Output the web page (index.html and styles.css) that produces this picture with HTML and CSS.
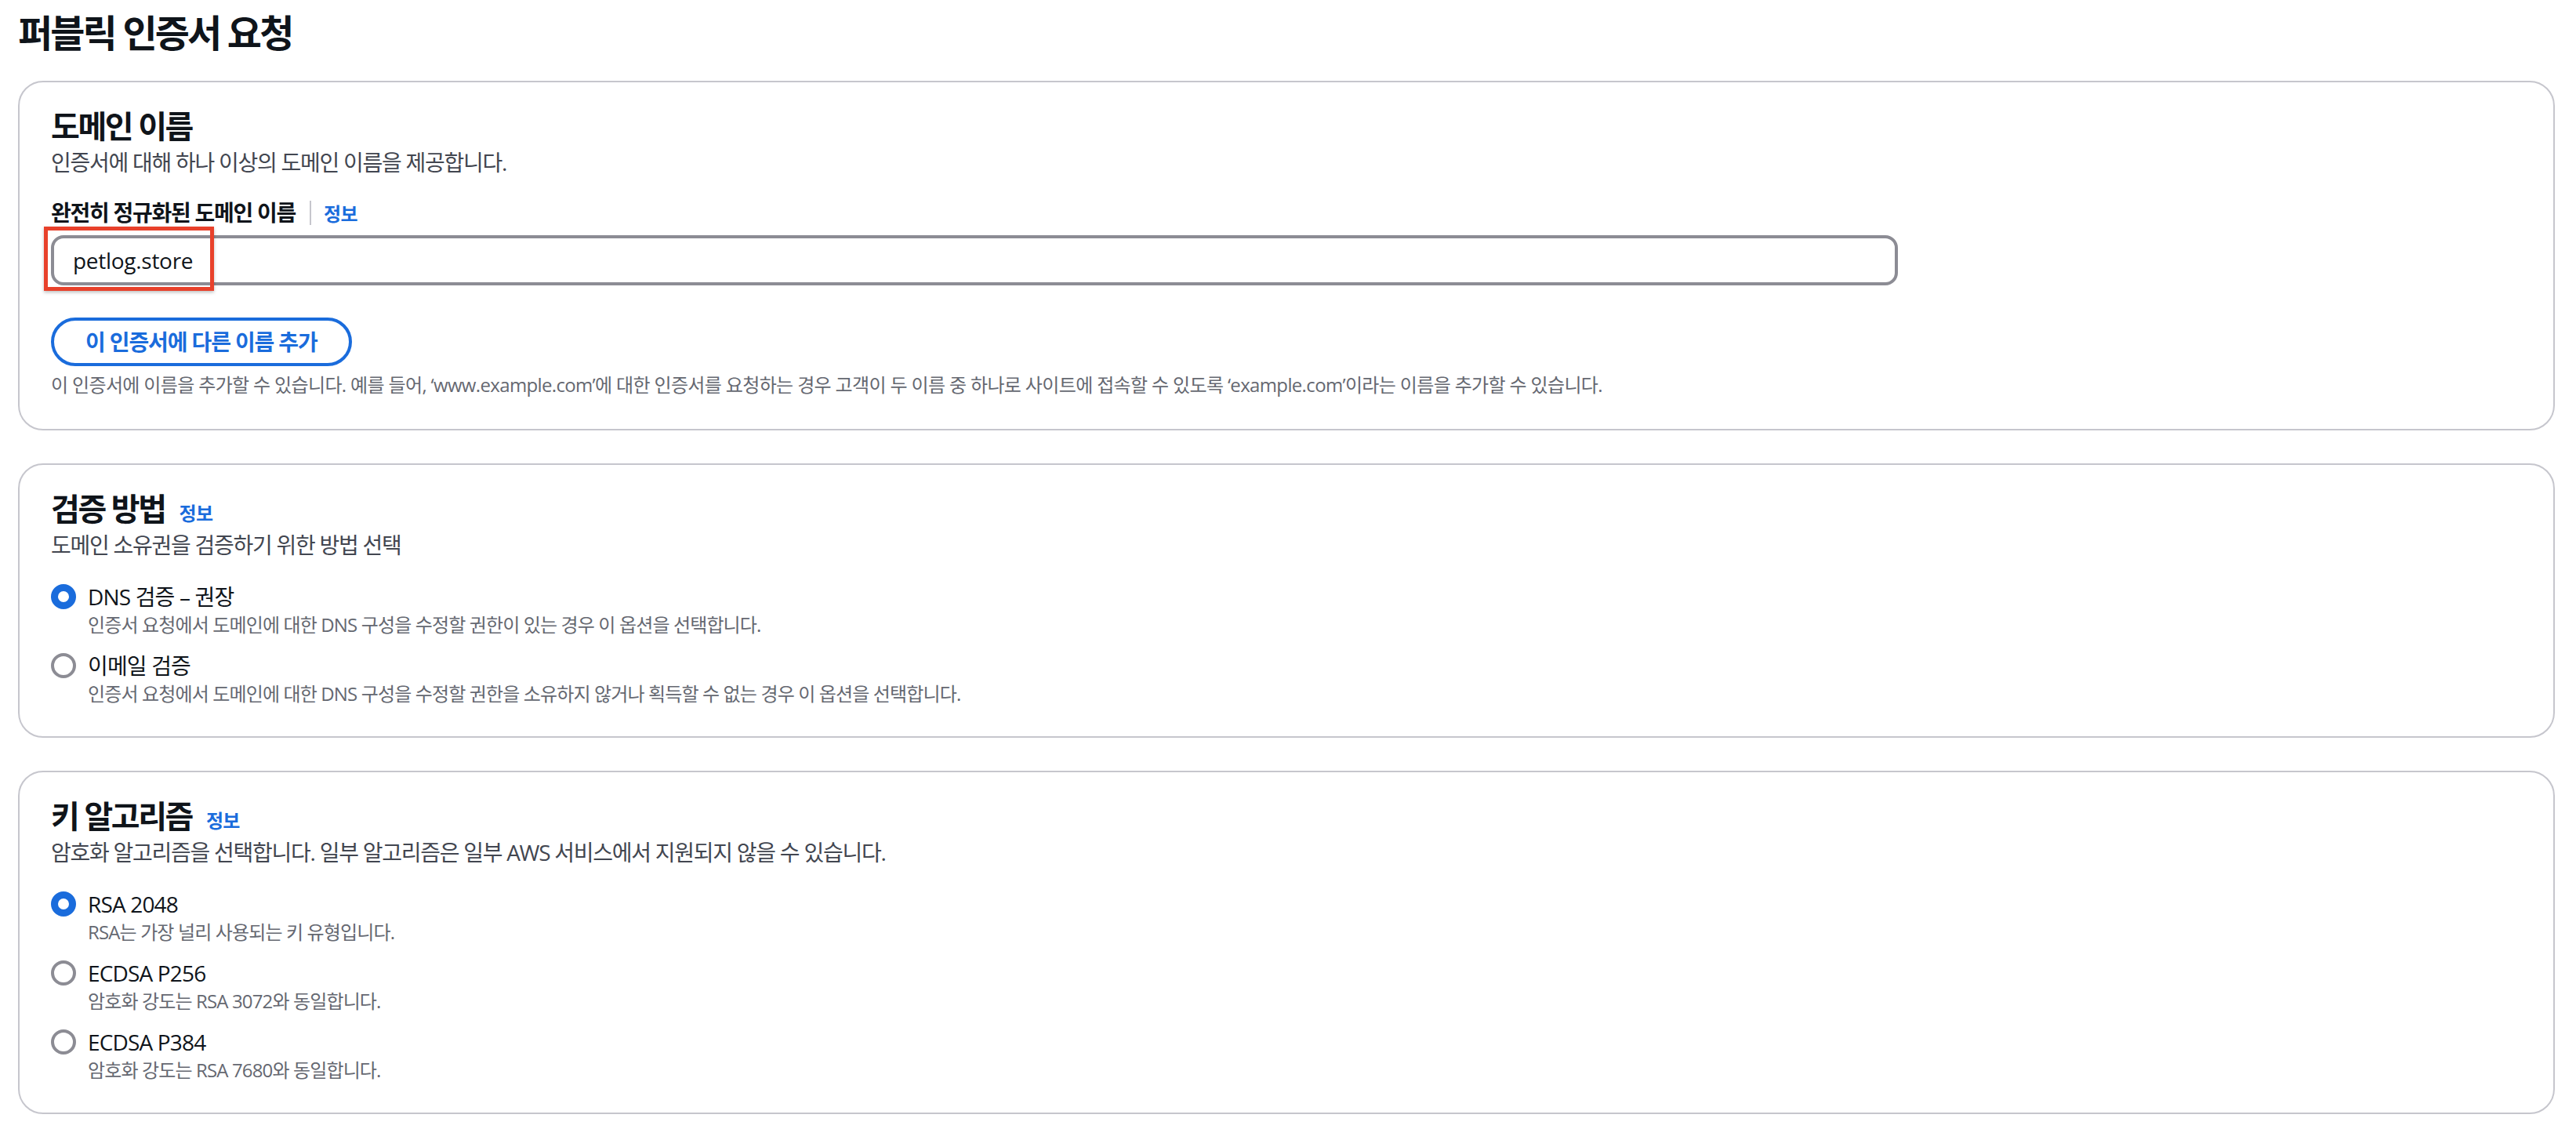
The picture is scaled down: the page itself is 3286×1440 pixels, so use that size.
FILE: index.html
```html
<!DOCTYPE html>
<html lang="ko">
<head>
<meta charset="utf-8">
<title>퍼블릭 인증서 요청</title>
<link rel="stylesheet" href="styles.css">
</head>
<body>
<main class="page">
  <h1 class="page-title">퍼블릭 인증서 요청</h1>

  <section class="card">
    <header class="card-header">
      <h2 class="card-title">도메인 이름</h2>
      <p class="card-desc">인증서에 대해 하나 이상의 도메인 이름을 제공합니다.</p>
    </header>
    <div class="card-body">
      <div class="field-label">
        <span class="label-text">완전히 정규화된 도메인 이름</span>
        <span class="label-divider"></span>
        <a class="info-link">정보</a>
      </div>
      <div class="input-wrap">
        <div class="text-input">petlog.store</div>
        <span class="annotation"></span>
      </div>
      <button class="btn-normal" type="button">이 인증서에 다른 이름 추가</button>
      <p class="constraint">이 인증서에 이름을 추가할 수 있습니다. 예를 들어, ‘www.example.com’에 대한 인증서를 요청하는 경우 고객이 두 이름 중 하나로 사이트에 접속할 수 있도록 ‘example.com’이라는 이름을 추가할 수 있습니다.</p>
    </div>
  </section>

  <section class="card">
    <header class="card-header">
      <h2 class="card-title">검증 방법<a class="info-link heading-info">정보</a></h2>
      <p class="card-desc">도메인 소유권을 검증하기 위한 방법 선택</p>
    </header>
    <div class="card-body radio-group">
      <div class="radio-item">
        <span class="radio checked"></span>
        <span class="radio-label">DNS 검증 – 권장</span>
        <span class="radio-desc">인증서 요청에서 도메인에 대한 DNS 구성을 수정할 권한이 있는 경우 이 옵션을 선택합니다.</span>
      </div>
      <div class="radio-item">
        <span class="radio"></span>
        <span class="radio-label">이메일 검증</span>
        <span class="radio-desc">인증서 요청에서 도메인에 대한 DNS 구성을 수정할 권한을 소유하지 않거나 획득할 수 없는 경우 이 옵션을 선택합니다.</span>
      </div>
    </div>
  </section>

  <section class="card">
    <header class="card-header">
      <h2 class="card-title">키 알고리즘<a class="info-link heading-info">정보</a></h2>
      <p class="card-desc">암호화 알고리즘을 선택합니다. 일부 알고리즘은 일부 AWS 서비스에서 지원되지 않을 수 있습니다.</p>
    </header>
    <div class="card-body radio-group">
      <div class="radio-item">
        <span class="radio checked"></span>
        <span class="radio-label">RSA 2048</span>
        <span class="radio-desc">RSA는 가장 널리 사용되는 키 유형입니다.</span>
      </div>
      <div class="radio-item">
        <span class="radio"></span>
        <span class="radio-label">ECDSA P256</span>
        <span class="radio-desc">암호화 강도는 RSA 3072와 동일합니다.</span>
      </div>
      <div class="radio-item">
        <span class="radio"></span>
        <span class="radio-label">ECDSA P384</span>
        <span class="radio-desc">암호화 강도는 RSA 7680와 동일합니다.</span>
      </div>
    </div>
  </section>
</main>
</body>
</html>
```

FILE: styles.css
```css
* { box-sizing: border-box; }

html, body {
  margin: 0;
  background: #ffffff;
}

body {
  font-family: "Open Sans", "Noto Sans CJK KR", sans-serif;
  color: #0f141a;
}

.page {
  padding: 12px 27px 40px 23px;
}

.page-title {
  margin: 0 0 31px;
  height: 60px;
  font-size: 48px;
  line-height: 60px;
  font-weight: 700;
  letter-spacing: -0.06em;
  color: #0f141a;
  white-space: nowrap;
}

.card {
  border: 2px solid #c6c6cd;
  border-radius: 32px;
  padding: 32px 40px 40px;
  margin-bottom: 42px;
  background: #ffffff;
}

.card-header {
  padding-bottom: 24px;
}

.card-title {
  margin: 0;
  height: 48px;
  font-size: 40px;
  line-height: 48px;
  font-weight: 700;
  letter-spacing: -0.06em;
  color: #0f141a;
  white-space: nowrap;
}

.card-desc {
  margin: 2px 0 0;
  height: 40px;
  font-size: 28px;
  line-height: 40px;
  letter-spacing: -0.045em;
  color: #424650;
  white-space: nowrap;
}

.field-label {
  display: flex;
  align-items: center;
  height: 40px;
}

.label-text {
  font-size: 28px;
  line-height: 40px;
  font-weight: 700;
  letter-spacing: -0.045em;
  color: #0f141a;
}

.label-divider {
  width: 2px;
  height: 31px;
  background: #c6c6cd;
  margin: 0 16px 0 18px;
}

.info-link {
  font-size: 24px;
  font-weight: 700;
  letter-spacing: -0.03em;
  color: #1a6cdc;
  text-decoration: none;
}

.heading-info {
  margin-left: 18px;
}

.input-wrap {
  position: relative;
  width: 2356px;
  margin-top: 9px;
}

.text-input {
  height: 64px;
  border: 4px solid #8c8c94;
  border-radius: 16px;
  padding: 8px 24px;
  background: #ffffff;
  font-size: 28px;
  line-height: 40px;
  letter-spacing: -0.01em;
  color: #0f141a;
  overflow: hidden;
}

.annotation {
  position: absolute;
  left: -9px;
  top: -11px;
  width: 217px;
  height: 82px;
  border: 5px solid #e8412b;
  box-shadow: 0 2px 4px rgba(0, 0, 0, 0.25);
}

.btn-normal {
  display: block;
  margin-top: 41px;
  height: 62px;
  padding: 7px 40px;
  border: 4px solid #1a6cdc;
  border-radius: 40px;
  background: #ffffff;
  font-family: inherit;
  font-size: 28px;
  line-height: 40px;
  font-weight: 700;
  letter-spacing: -0.04em;
  color: #1a6cdc;
  white-space: nowrap;
  overflow: hidden;
}

.constraint {
  margin: 8px 0 0;
  height: 32px;
  font-size: 24px;
  line-height: 32px;
  letter-spacing: -0.027em;
  color: #656871;
  white-space: nowrap;
}

.radio-group {
  display: flex;
  flex-direction: column;
  gap: 16px;
}

.radio-item {
  display: grid;
  grid-template-columns: 32px 1fr;
  grid-template-rows: 44px 28px;
  column-gap: 15px;
}

.radio {
  grid-row: 1;
  grid-column: 1;
  width: 32px;
  height: 32px;
  margin-top: 6px;
  border-radius: 50%;
  border: 4px solid #8c8c94;
  background: #ffffff;
}

.radio.checked {
  border: 9px solid #1a6cdc;
}

.radio-label {
  grid-row: 1;
  grid-column: 2;
  height: 44px;
  font-size: 28px;
  line-height: 44px;
  letter-spacing: -0.03em;
  color: #0f141a;
  white-space: nowrap;
}

.radio-desc {
  grid-row: 2;
  grid-column: 2;
  height: 28px;
  font-size: 24px;
  line-height: 28px;
  letter-spacing: -0.036em;
  color: #656871;
  white-space: nowrap;
}
```
